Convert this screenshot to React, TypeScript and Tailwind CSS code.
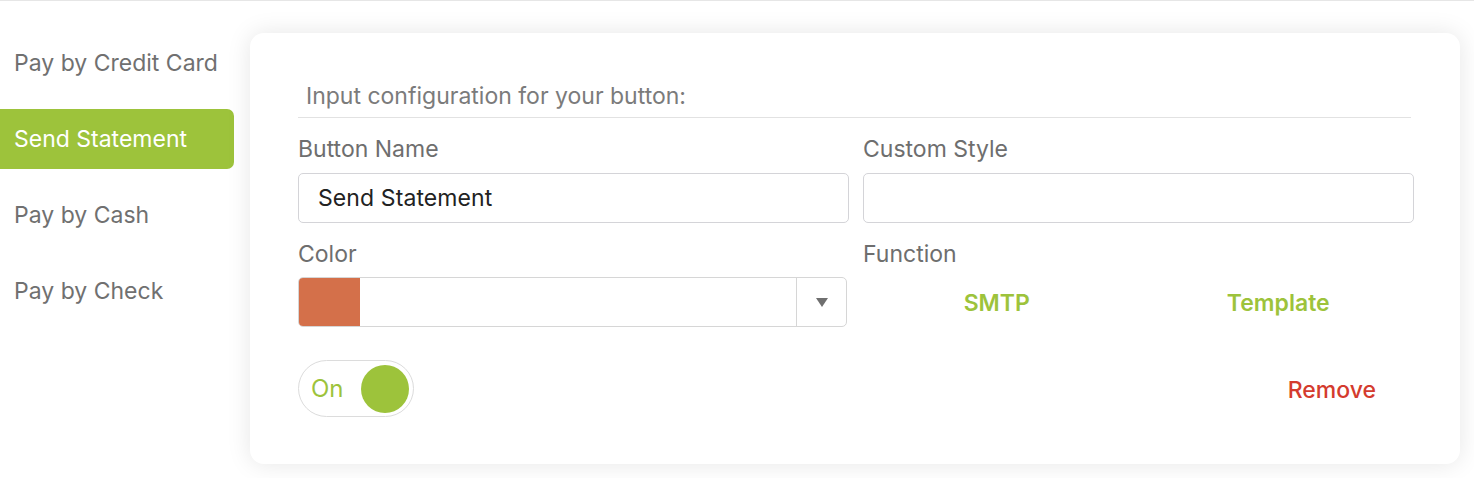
import { useState } from "react";

const GREEN = "#9dc33b";

const methods = ["Pay by Credit Card", "Send Statement", "Pay by Cash", "Pay by Check"];

const Sidebar = ({ active, onPick }: { active: number; onPick: (i: number) => void }) => (
  <nav className="w-[234px] shrink-0 pt-[32px] flex flex-col gap-4">
    {methods.map((m, i) => (
      <button
        key={m}
        onClick={() => onPick(i)}
        className={
          i === active
            ? "h-[60px] rounded-r-[7px] bg-[#9dc33b] text-white text-left pl-[14px] pt-[1px] text-[23px]"
            : "h-[60px] text-[#707070] text-left pl-[14px] pt-[1px] text-[23px]"
        }
      >
        {m}
      </button>
    ))}
  </nav>
);

export default function App() {
  const [active, setActive] = useState(1);
  const [on, setOn] = useState(true);

  return (
    <div
      className="w-full h-[478px] bg-white border-t border-[#e6e6e6] flex overflow-hidden"
      style={{ fontFamily: "Inter, 'Liberation Sans', sans-serif" }}
    >
      <Sidebar active={active} onPick={setActive} />

      <div className="ml-4 mt-[32px] w-[1210px] h-[431px] rounded-[14px] bg-white shadow-[0_0_24px_rgba(0,0,0,0.1)] pl-[48px] pr-[46px] pt-[49px]">
        <div className="border-b border-[#e2e2e2] mr-[3px] pl-2 pb-[7px] text-[23px] leading-[28px] text-[#7b7b7b]">
          Input configuration for your button:
        </div>

        <div className="grid grid-cols-2 gap-x-[14px] mt-[17px]">
          <div>
            <div className="text-[23px] leading-[28px] text-[#6e6e6e] mb-[10px]">Button Name</div>
            <input
              defaultValue="Send Statement"
              className="w-full h-[50px] rounded-[5px] border border-[#d4d4d8] px-[19px] text-[23px] tracking-[0.1px] text-[#222] outline-none"
            />
          </div>
          <div>
            <div className="text-[23px] leading-[28px] text-[#6e6e6e] mb-[10px]">Custom Style</div>
            <input className="w-full h-[50px] rounded-[5px] border border-[#d4d4d8] px-[19px] text-[23px] text-[#222] outline-none" />
          </div>

          <div className="mt-[17px]">
            <div className="text-[23px] leading-[28px] text-[#6e6e6e] mb-[9px]">Color</div>
            <div className="flex h-[50px] mr-[2px] rounded-[5px] border border-[#d6d6d6] overflow-hidden">
              <div className="w-[61px] bg-[#d4704a]" />
              <div className="flex-1" />
              <div className="w-[50px] border-l border-[#d6d6d6] flex items-center justify-center">
                <svg width="12" height="9" viewBox="0 0 12 9">
                  <path d="M0 0 H12 L6 9 Z" fill="#6f6f6f" />
                </svg>
              </div>
            </div>
          </div>
          <div className="mt-[17px]">
            <div className="text-[23px] leading-[28px] text-[#6e6e6e] mb-[9px]">Function</div>
            <div className="grid grid-cols-2 h-[50px] items-center text-center text-[23px] font-semibold text-[#9dc33b] pt-[3px]">
              <button className="pr-[8px]">SMTP</button>
              <button className="pl-[4px]">Template</button>
            </div>
          </div>
        </div>

        <div className="flex items-center justify-between mt-[33px]">
          <button
            onClick={() => setOn(!on)}
            className="w-[116px] h-[57px] rounded-full border border-[#dcdcdc] flex items-center justify-between pl-[12px] pr-[4px]"
          >
            <span className="text-[24px]" style={{ color: GREEN }}>
              {on ? "On" : "Off"}
            </span>
            <span className="w-[48px] h-[48px] rounded-full bg-[#9dc33b]" />
          </button>
          <button className="text-[23px] font-medium text-[#d43b2e] pr-[38px] pt-[3px]">Remove</button>
        </div>
      </div>
    </div>
  );
}
